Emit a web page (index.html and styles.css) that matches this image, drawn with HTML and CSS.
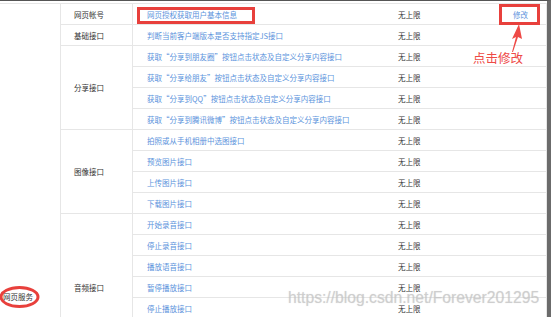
FILE: index.html
```html
<!DOCTYPE html>
<html lang="zh-CN">
<head>
<meta charset="utf-8">
<title>网页服务</title>
<link rel="stylesheet" href="styles.css">
</head>
<body>
<div class="screen">
  <div class="grid">
    <div class="c1">网页服务</div>

    <div class="cat">网页帐号</div>
    <div class="cell link">网页授权获取用户基本信息</div>
    <div class="cell lim">无上限</div>
    <div class="cell op">修改</div>

    <div class="cat">基础接口</div>
    <div class="cell link">判断当前客户端版本是否支持指定JS接口</div>
    <div class="cell lim">无上限</div>
    <div class="cell"></div>

    <div class="cat span4">分享接口</div>
    <div class="cell link">获取“分享到朋友圈”按钮点击状态及自定义分享内容接口</div>
    <div class="cell lim">无上限</div>
    <div class="cell"></div>
    <div class="cell link">获取“分享给朋友”按钮点击状态及自定义分享内容接口</div>
    <div class="cell lim">无上限</div>
    <div class="cell"></div>
    <div class="cell link">获取“分享到QQ”按钮点击状态及自定义分享内容接口</div>
    <div class="cell lim">无上限</div>
    <div class="cell"></div>
    <div class="cell link">获取“分享到腾讯微博”按钮点击状态及自定义分享内容接口</div>
    <div class="cell lim">无上限</div>
    <div class="cell"></div>

    <div class="cat span4">图像接口</div>
    <div class="cell link">拍照或从手机相册中选图接口</div>
    <div class="cell lim">无上限</div>
    <div class="cell"></div>
    <div class="cell link">预览图片接口</div>
    <div class="cell lim">无上限</div>
    <div class="cell"></div>
    <div class="cell link">上传图片接口</div>
    <div class="cell lim">无上限</div>
    <div class="cell"></div>
    <div class="cell link">下载图片接口</div>
    <div class="cell lim">无上限</div>
    <div class="cell"></div>

    <div class="cat span7">音频接口</div>
    <div class="cell link">开始录音接口</div>
    <div class="cell lim">无上限</div>
    <div class="cell"></div>
    <div class="cell link">停止录音接口</div>
    <div class="cell lim">无上限</div>
    <div class="cell"></div>
    <div class="cell link">播放语音接口</div>
    <div class="cell lim">无上限</div>
    <div class="cell"></div>
    <div class="cell link">暂停播放接口</div>
    <div class="cell lim">无上限</div>
    <div class="cell"></div>
    <div class="cell link">停止播放接口</div>
    <div class="cell lim">无上限</div>
    <div class="cell"></div>
    <div class="cell link">上传语音接口</div>
    <div class="cell lim">无上限</div>
    <div class="cell"></div>
    <div class="cell link">下载语音接口</div>
    <div class="cell lim">无上限</div>
    <div class="cell"></div>
  </div>
</div>

<div class="mark box-link"></div>
<div class="mark box-op"></div>
<svg class="arrow" width="20" height="32" viewBox="0 0 20 32">
  <polygon points="9,0 2,15 6,13 2,28 3,28 8,13 12,15" fill="#ee4a46"/>
</svg>
<div class="note">点击修改</div>
<svg class="ellipse" width="42" height="24" viewBox="0 0 42 24">
  <ellipse cx="20.5" cy="12" rx="18.5" ry="9.5" fill="none" stroke="#e8403c" stroke-width="3"/>
</svg>
<div class="watermark">https://blog.csdn.net/Forever201295</div>
</body>
</html>
```

FILE: styles.css
```css
html, body {
  margin: 0;
  padding: 0;
  background: #fff;
  overflow: hidden;
}

body {
  width: 551px;
  height: 317px;
  position: relative;
  font-family: "Noto Sans CJK SC", "Noto Sans", sans-serif;
  font-size: 7.5px;
  color: #333;
}

.screen {
  width: 547px;
  height: 316px;
  border-top: 1px solid #555;
  border-right: 4px solid #6b6b6b;
  overflow: hidden;
}

.grid {
  margin-top: 2px;
  display: grid;
  grid-template-columns: 60px 72px 252px 115px 47px;
  grid-auto-rows: 21px;
  border-top: 1px solid #e6e6e6;
  width: 546px;
  border-right: 1px solid #e6e6e6;
}

.c1 {
  grid-column: 1;
  grid-row: 1 / span 17;
  display: flex;
  align-items: flex-end;
  padding: 0 0 59px 3px;
  line-height: 10px;
}

.cat {
  grid-column: 2;
  display: flex;
  align-items: center;
  padding-left: 13px;
  border-left: 1px solid #e6e6e6;
  border-bottom: 1px solid #e6e6e6;
}

.span4 { grid-row: span 4; }
.span7 { grid-row: span 7; }

.cell {
  display: flex;
  align-items: center;
  padding-left: 14px;
  border-bottom: 1px solid #e6e6e6;
  white-space: nowrap;
  overflow: hidden;
}

.link {
  border-left: 1px solid #e6e6e6;
  padding-left: 14px;
  color: #5b93dc;
}

.lim { color: #333; }
.op { color: #5b93dc; }

.mark {
  position: absolute;
  border: 3px solid #e8403c;
  box-sizing: border-box;
}

.box-link {
  left: 137px;
  top: 7px;
  width: 118px;
  height: 17px;
}

.box-op {
  left: 499px;
  top: 4px;
  width: 41px;
  height: 21px;
}

.arrow {
  position: absolute;
  left: 510px;
  top: 24px;
}

.note {
  position: absolute;
  left: 473px;
  top: 50px;
  font-size: 12.5px;
  line-height: 15px;
  color: #ee4a46;
  letter-spacing: 0;
}

.ellipse {
  position: absolute;
  left: -1px;
  top: 285px;
}

.watermark {
  position: absolute;
  left: 288px;
  top: 289px;
  font-family: "Liberation Sans", Arial, sans-serif;
  font-size: 15.7px;
  line-height: 18px;
  color: rgba(200, 200, 200, 0.75);
  text-shadow: 0 0 1px rgba(120, 120, 120, 0.25);
  white-space: nowrap;
}
```
